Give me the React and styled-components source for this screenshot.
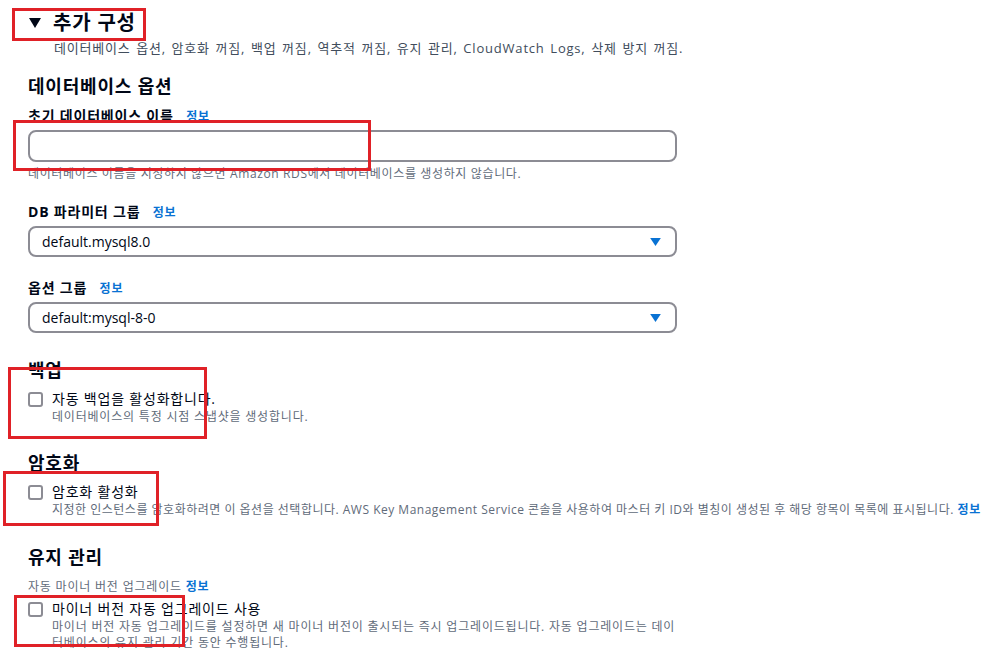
import React from "react";
import styled, { createGlobalStyle } from "styled-components";

const GlobalStyle = createGlobalStyle`
  html, body {
    margin: 0;
    padding: 0;
    background: #ffffff;
  }
  body {
    font-family: "Open Sans", "Noto Sans CJK KR", sans-serif;
    color: #000716;
    letter-spacing: 0.8px;
  }
`;

function App() {
  return (
    <>
      <GlobalStyle />
      <Page>
        <Header>
          <Caret viewBox="0 0 12 10">
            <path d="M0 0 L12 0 L6 10 Z" fill="#000716" />
          </Caret>
          <Title>추가 구성</Title>
        </Header>
        <Summary>
          데이터베이스 옵션, 암호화 꺼짐, 백업 꺼짐, 역추적 꺼짐, 유지 관리, CloudWatch Logs,
          삭제 방지 꺼짐.
        </Summary>

        <SectionTitle $top={17}>데이터베이스 옵션</SectionTitle>

        <Label $top={8}>
          초기 데이터베이스 이름 <Info>정보</Info>
        </Label>
        <Input />
        <Hint>데이터베이스 이름을 지정하지 않으면 Amazon RDS에서 데이터베이스를 생성하지 않습니다.</Hint>

        <Label $top={20}>
          DB 파라미터 그룹 <Info>정보</Info>
        </Label>
        <Select>
          <span>default.mysql8.0</span>
          <Arrow viewBox="0 0 12 9">
            <path d="M0 0 L12 0 L6 9 Z" fill="#0972d3" />
          </Arrow>
        </Select>

        <Label $top={21}>
          옵션 그룹 <Info>정보</Info>
        </Label>
        <Select>
          <span>default:mysql-8-0</span>
          <Arrow viewBox="0 0 12 9">
            <path d="M0 0 L12 0 L6 9 Z" fill="#0972d3" />
          </Arrow>
        </Select>

        <SectionTitle $top={25}>백업</SectionTitle>
        <CheckRow $top={7}>
          <Box />
          <CheckText>
            <CheckLabel>자동 백업을 활성화합니다.</CheckLabel>
            <CheckDesc>데이터베이스의 특정 시점 스냅샷을 생성합니다.</CheckDesc>
          </CheckText>
        </CheckRow>

        <SectionTitle $top={26}>암호화</SectionTitle>
        <CheckRow $top={7}>
          <Box />
          <CheckText>
            <CheckLabel>암호화 활성화</CheckLabel>
            <CheckDesc $nowrap>
              지정한 인스턴스를 암호화하려면 이 옵션을 선택합니다. AWS Key Management Service
              콘솔을 사용하여 마스터 키 ID와 별칭이 생성된 후 해당 항목이 목록에 표시됩니다.{" "}
              <Info>정보</Info>
            </CheckDesc>
          </CheckText>
        </CheckRow>

        <SectionTitle $top={27}>유지 관리</SectionTitle>
        <SubLabel>
          자동 마이너 버전 업그레이드 <Info>정보</Info>
        </SubLabel>
        <CheckRow $top={4}>
          <Box />
          <CheckText $width={627}>
            <CheckLabel>마이너 버전 자동 업그레이드 사용</CheckLabel>
            <CheckDesc>
              마이너 버전 자동 업그레이드를 설정하면 새 마이너 버전이 출시되는 즉시
              업그레이드됩니다. 자동 업그레이드는 데이터베이스의 유지 관리 기간 동안 수행됩니다.
            </CheckDesc>
          </CheckText>
        </CheckRow>

        <Mark $x={12} $y={8} $w={134} $h={33} />
        <Mark $x={13} $y={120} $w={358} $h={51} />
        <Mark $x={8} $y={367} $w={199} $h={72} />
        <Mark $x={3} $y={471} $w={156} $h={55} />
        <Mark $x={14} $y={595} $w={171} $h={52} />
      </Page>
    </>
  );
}

const Page = styled.div`
  position: relative;
  padding: 9px 0 20px 28px;
  width: 980px;
`;

const Header = styled.div`
  display: flex;
  align-items: center;
  gap: 12px;
  padding-left: 1px;
  height: 28px;
`;

const Caret = styled.svg`
  width: 12px;
  height: 10px;
`;

const Title = styled.h2`
  margin: 0;
  font-size: 20px;
  font-weight: 700;
  line-height: 28px;
`;

const Summary = styled.div`
  margin: 2px 0 0 26px;
  font-size: 13px;
  line-height: 18px;
  color: #414d5c;
  word-spacing: 1.5px;
`;

const SectionTitle = styled.h3`
  margin: ${(p) => p.$top}px 0 0;
  font-size: 18px;
  font-weight: 700;
  line-height: 24px;
`;

const Label = styled.div`
  margin-top: ${(p) => p.$top}px;
  font-size: 14px;
  font-weight: 700;
  line-height: 20px;
`;

const Info = styled.span`
  margin-left: 8px;
  font-size: 12px;
  font-weight: 700;
  letter-spacing: 0.8px;
  color: #0972d3;
`;

const Input = styled.div`
  box-sizing: border-box;
  margin-top: 3px;
  width: 649px;
  height: 32px;
  border: 2px solid #8c8c94;
  border-radius: 8px;
`;

const Hint = styled.div`
  margin-top: 4px;
  font-size: 12px;
  line-height: 16px;
  letter-spacing: 0.64px;
  color: #5f6b7a;
`;

const Select = styled.div`
  box-sizing: border-box;
  margin-top: 3px;
  width: 649px;
  height: 31px;
  border: 2px solid #8c8c94;
  border-radius: 8px;
  display: flex;
  align-items: center;
  justify-content: space-between;
  padding: 0 14px 0 12px;
  font-size: 14px;
  letter-spacing: 0;
  color: #000716;
`;

const Arrow = styled.svg`
  width: 11px;
  height: 8px;
`;

const CheckRow = styled.div`
  display: flex;
  align-items: flex-start;
  gap: 9px;
  margin-top: ${(p) => p.$top}px;
`;

const Box = styled.div`
  box-sizing: border-box;
  flex: none;
  margin-top: 3px;
  width: 15px;
  height: 15px;
  border: 2px solid #8c8c94;
  border-radius: 3px;
`;

const CheckText = styled.div`
  display: flex;
  flex-direction: column;
  width: ${(p) => (p.$width ? `${p.$width}px` : "auto")};
`;

const CheckLabel = styled.div`
  font-size: 14px;
  line-height: 20px;
`;

const CheckDesc = styled.div`
  font-size: 12px;
  line-height: 16px;
  color: #5f6b7a;
  white-space: ${(p) => (p.$nowrap ? "nowrap" : "normal")};
  letter-spacing: ${(p) => (p.$nowrap ? "0.5px" : "0.8px")};

  ${Info} {
    margin-left: 0;
  }
`;

const SubLabel = styled.div`
  margin-top: 10px;
  font-size: 12px;
  line-height: 16px;
  color: #5f6b7a;

  ${Info} {
    margin-left: 0;
  }
`;

const Mark = styled.div`
  position: absolute;
  left: ${(p) => p.$x}px;
  top: ${(p) => p.$y}px;
  width: ${(p) => p.$w}px;
  height: ${(p) => p.$h}px;
  border: 3px solid #e02127;
  box-sizing: border-box;
  pointer-events: none;
`;

export default App;
